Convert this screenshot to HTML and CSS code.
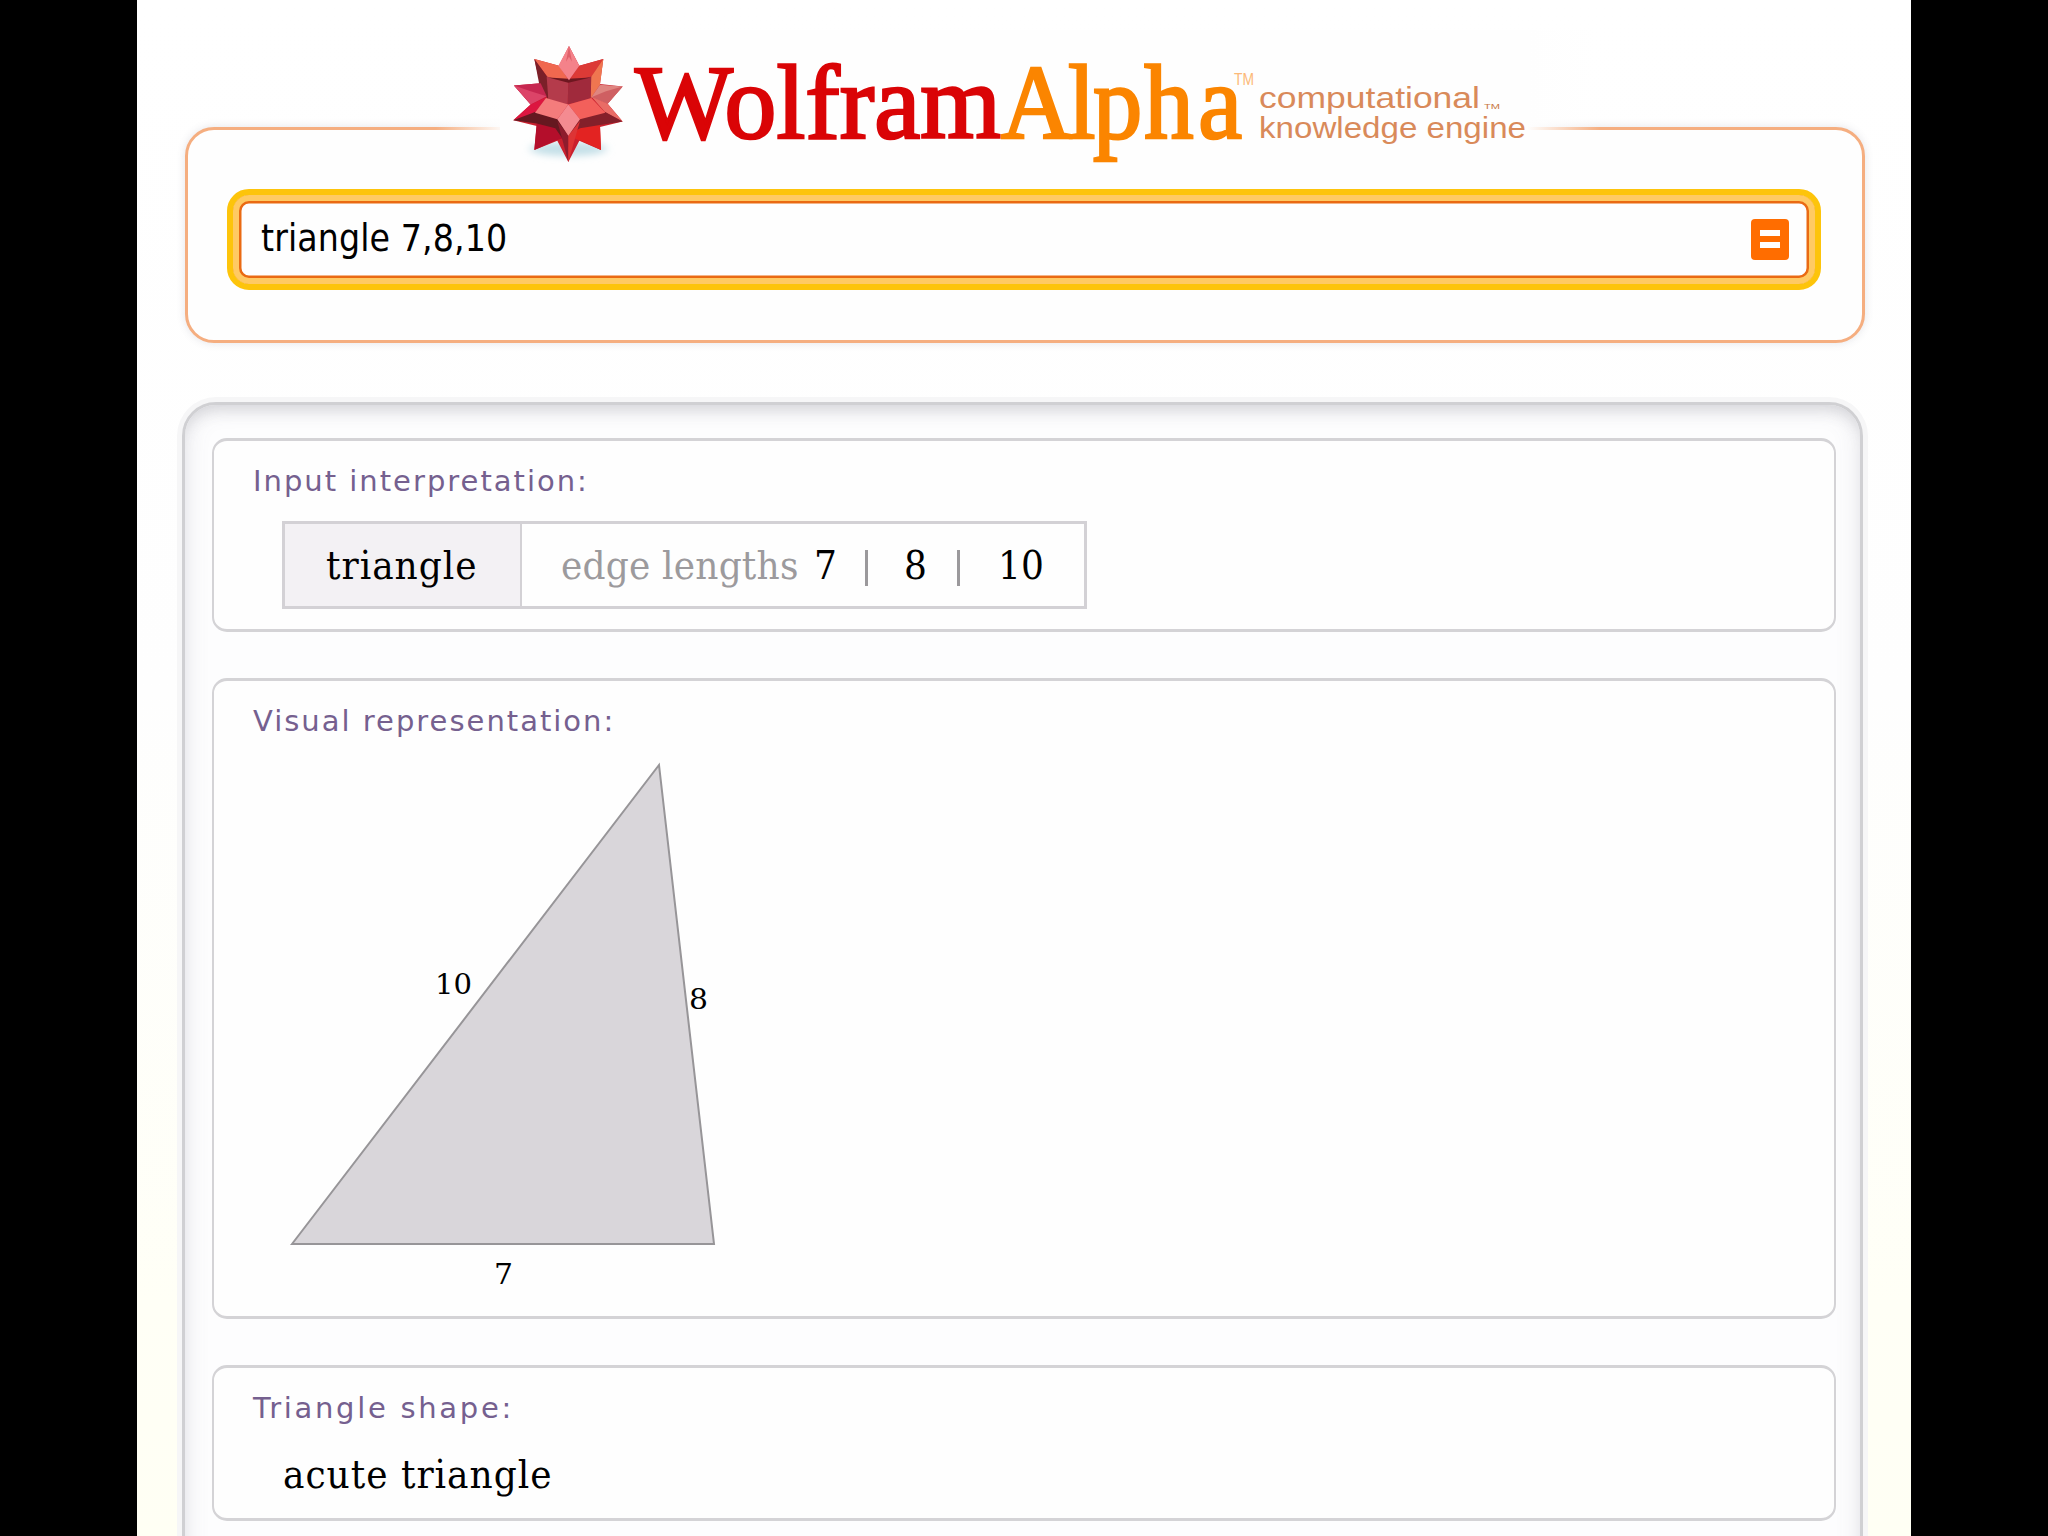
FILE: index.html
```html
<!DOCTYPE html>
<html lang="en">
<head>
  <meta charset="utf-8">
  <title>triangle 7,8,10 - Wolfram|Alpha</title>
  <link rel="stylesheet" href="styles.css">
</head>
<body>
  <div class="page">
    <form class="search">
      <div class="query">
        <input type="text" class="query-input" value="triangle 7,8,10">
        <button type="button" class="query-button" aria-label="compute">
          <svg width="38" height="41" viewBox="0 0 38 41">
            <rect width="38" height="41" rx="4" fill="#ff6d00"/>
            <path d="M9 11h20v6H9zM9 23h20v6H9z" fill="#fff"/>
          </svg>
        </button>
      </div>

      <!-- logo sits on top of the box border -->
      <div class="logo">
        <svg width="1060" height="140" viewBox="500 30 1060 140">
          <defs>
            <filter id="soft" x="-20%" y="-50%" width="140%" height="200%"><feGaussianBlur stdDeviation="12"/></filter>
          </defs>
          <g transform="translate(500 42) scale(.3333 .329)">
            <ellipse cx="205" cy="325" rx="115" ry="22" fill="#c5e0e8" filter="url(#soft)"/>
            <path d="M207 12L238 72 310 52 300 128 368 135 323 188 368 242 300 258 303 328 238 300 205 365 172 300 103 328 110 255 40 238 92 190 42 132 120 125 103 52 177 72z" fill="#c9202e"/>
            <path d="M103 52L177 72 207 118 145 110z" fill="#f0684f"/>
            <path d="M103 52L145 110 145 175 120 140z" fill="#7b2029"/>
            <path d="M310 52L238 72 207 118 272 108z" fill="#dc3a36"/>
            <path d="M310 52L272 108 272 172 300 130z" fill="#ef7650"/>
            <path d="M140 105L205 122 203 190 145 174z" fill="#b43b4b"/>
            <path d="M205 122L274 105 272 172 203 190z" fill="#a02a3c"/>
            <path d="M145 108L205 124 272 108 205 112z" fill="#6d1720"/>
            <path d="M207 12L238 72 207 116 175 72z" fill="#f4828a"/>
            <path d="M207 12L216 60 207 45 198 60z" fill="#e0606a"/>
            <path d="M42 132L122 125 140 165 92 190z" fill="#c62750"/>
            <path d="M42 132L92 150 140 165 92 190z" fill="#dc4468"/>
            <path d="M368 135L300 130 274 168 323 188z" fill="#df8580"/>
            <path d="M368 135L318 150 274 168 323 188z" fill="#cf5f62"/>
            <path d="M92 190L40 238 105 215 140 168z" fill="#dc1640"/>
            <path d="M323 188L368 242 316 214 276 168z" fill="#e96c66"/>
            <path d="M110 248L103 328 165 300 195 290 170 240z" fill="#b40e2b"/>
            <path d="M300 250L303 328 242 300 215 290 240 240z" fill="#e32322"/>
            <path d="M40 238L105 213 172 232 205 285 205 320 166 262 110 248z" fill="#651820"/>
            <path d="M368 242L316 213 240 232 205 285 240 262 300 252z" fill="#84202a"/>
            <path d="M172 240L205 285 205 365z" fill="#8e1c2d"/>
            <path d="M240 240L205 285 205 365z" fill="#dd3435"/>
            <path d="M105 215L138 170 205 190 172 235z" fill="#f47c7c"/>
            <path d="M316 215L274 170 205 190 240 235z" fill="#f3605b"/>
            <path d="M205 190L240 235 205 285 172 235z" fill="#f48b91"/>
          </g>
          <text class="word wolfram" x="635" y="138" textLength="366" lengthAdjust="spacingAndGlyphs">Wolfram</text>
          <text class="word alpha" transform="translate(1001 0) scale(.93 1)" x="0 72 99 154 212" y="138">Alpha</text>
          <text class="tm" x="1234" y="85" textLength="20" lengthAdjust="spacingAndGlyphs">TM</text>
          <text class="tagline" x="1259" y="108" textLength="221" lengthAdjust="spacingAndGlyphs">computational</text>
          <text class="tagline-tm" x="1484" y="109" textLength="16" lengthAdjust="spacingAndGlyphs">TM</text>
          <text class="tagline" x="1259" y="138" textLength="267" lengthAdjust="spacingAndGlyphs">knowledge engine</text>
        </svg>
      </div>
    </form>

    <div class="results">
      <section class="pod pod-input">
        <h2>Input interpretation:</h2>
        <div class="interpretation">
          <span class="subject">triangle</span>
          <span class="property"><span class="muted">edge lengths</span><span class="n1">7</span><i></i><span class="n2">8</span><i></i><span class="n3">10</span></span>
        </div>
      </section>

      <section class="pod pod-visual">
        <h2>Visual representation:</h2>
        <svg class="figure" width="460" height="550" viewBox="280 750 460 550">
          <path d="M292 1244L659 765 714 1244z" fill="#d9d6da" stroke="#979598" stroke-width="2"/>
          <text x="435" y="994" textLength="37" lengthAdjust="spacingAndGlyphs">10</text>
          <text x="689" y="1009" textLength="19" lengthAdjust="spacingAndGlyphs">8</text>
          <text x="494" y="1284" textLength="19" lengthAdjust="spacingAndGlyphs">7</text>
        </svg>
      </section>

      <section class="pod pod-shape">
        <h2>Triangle shape:</h2>
        <p>acute triangle</p>
      </section>
    </div>
  </div>
</body>
</html>
```
FILE: styles.css
```css
* {
  box-sizing: border-box;
  margin: 0;
  padding: 0;
}
body {
  height: 1536px;
  overflow: hidden;
  background: #000;
}
.page {
  width: 1774px;
  height: 1536px;
  margin-left: 137px;
  padding: 127px 46px 0 48px;
  overflow: hidden;
  background: linear-gradient(#fff 0%, #fefefe 45%, #fffff6 85%, #fffff4 100%);
}

/* search box */
.search {
  position: relative;
  height: 216px;
  padding: 59px 41px 0 39px;
  border: 3px solid #f5ae80;
  border-radius: 29px;
  background: #fefefe;
  box-shadow: 0 0 9px rgba(90, 90, 110, 0.16);
}
.query {
  display: flex;
  align-items: center;
  height: 101px;
  padding: 0 18px 0 20px;
  border: 6px solid #fdc40b;
  border-radius: 22px;
  background: #fefefe;
  box-shadow: inset 0 0 0 6px #ffca63, inset 0 0 0 8.5px #ea6a13;
}
.query-input {
  flex: 1;
  height: 60px;
  padding: 0 0 2px 8px;
  border: none;
  outline: none;
  background: transparent;
  font: 37px "DejaVu Sans Condensed", "DejaVu Sans", sans-serif;
  font-stretch: condensed;
  letter-spacing: 0.1px;
  color: #000;
}
.query-button {
  width: 38px;
  height: 41px;
  margin-right: 8px;
  border: none;
  background: none;
}
.query-button svg {
  display: block;
}

/* logo */
.logo {
  position: absolute;
  left: 312px;
  top: -100px;
  width: 1100px;
  height: 140px;
  background: linear-gradient(90deg, #fefefe 0 93.4%, rgba(254, 254, 254, 0) 100%);
}
.logo::before {
  content: "";
  position: absolute;
  left: -64px;
  top: 90px;
  width: 70px;
  height: 16px;
  background: linear-gradient(90deg, rgba(254, 254, 254, 0), #fefefe);
}
.logo svg {
  display: block;
}
.word {
  font-family: "Liberation Serif", serif;
  font-size: 106px;
  stroke-width: 2.6px;
}
.wolfram {
  fill: #da0406;
  stroke: #da0406;
}
.alpha {
  fill: #fb8500;
  stroke: #fb8500;
}
.tm {
  font: 16px "Liberation Sans", sans-serif;
  fill: #fcb978;
}
.tagline {
  font: 30px "Liberation Sans", sans-serif;
  fill: #d98a5a;
}
.tagline-tm {
  font: 8px "Liberation Sans", sans-serif;
  fill: #c9763f;
}

/* results */
.results {
  display: flex;
  flex-direction: column;
  height: 1300px;
  margin: 59px 2px 0 -3px;
  padding: 33px 24px 0 27px;
  border: 3px solid #d0d0d3;
  border-radius: 34px;
  background: #fdfdfe;
  box-shadow: 0 0 0 5px #f6f6f7, inset 0 0 26px rgba(100, 100, 120, 0.14), inset 0 12px 16px -8px rgba(80, 80, 90, 0.18);
}
.pod {
  border: solid #d4d3d6;
  border-width: 3px 2px;
  border-radius: 15px;
  background: #fefefe;
}
.pod h2 {
  height: 40px;
  padding-left: 39px;
  font: 29px/39px "DejaVu Sans", Verdana, sans-serif;
  letter-spacing: 2px;
  color: #75608f;
}
.pod-input {
  height: 194px;
  padding-top: 21px;
}
.pod-visual {
  height: 641px;
  margin-top: 46px;
  padding-top: 21px;
}
.pod-shape {
  height: 156px;
  margin-top: 46px;
  padding-top: 21px;
}
.pod-shape h2 {
  letter-spacing: 2.7px;
}
.interpretation,
.pod-shape p {
  font-family: "DejaVu Serif Condensed", "DejaVu Serif", serif;
  font-stretch: condensed;
  font-size: 40px;
  letter-spacing: 1px;
  color: #000;
}
.interpretation {
  display: flex;
  width: 805px;
  height: 88px;
  margin: 19px 0 0 68px;
  border: 3px solid #d3d1d5;
  line-height: 82px;
}
.subject {
  width: 237px;
  padding-left: 41px;
  border-right: 2px solid #d3d1d5;
  background: #f3f1f4;
}
.property {
  display: flex;
  align-items: center;
  padding-left: 39px;
}
.property i {
  width: 3px;
  height: 36px;
  margin-top: 5px;
  background: #9b999c;
}
.muted {
  width: 253px;
  letter-spacing: 0.2px;
  white-space: nowrap;
  color: #9c9a9d;
}
.n1 {
  width: 51px;
}
.n2 {
  width: 89px;
  padding-left: 36px;
}
.n3 {
  padding-left: 38px;
  letter-spacing: 0;
}
.figure {
  display: block;
  margin: 8px 0 0 66px;
}
.figure text {
  font-family: "DejaVu Serif", serif;
  font-size: 27px;
  fill: #000;
}
.pod-shape p {
  height: 50px;
  margin-top: 20px;
  padding-left: 69px;
  line-height: 50px;
}
```
